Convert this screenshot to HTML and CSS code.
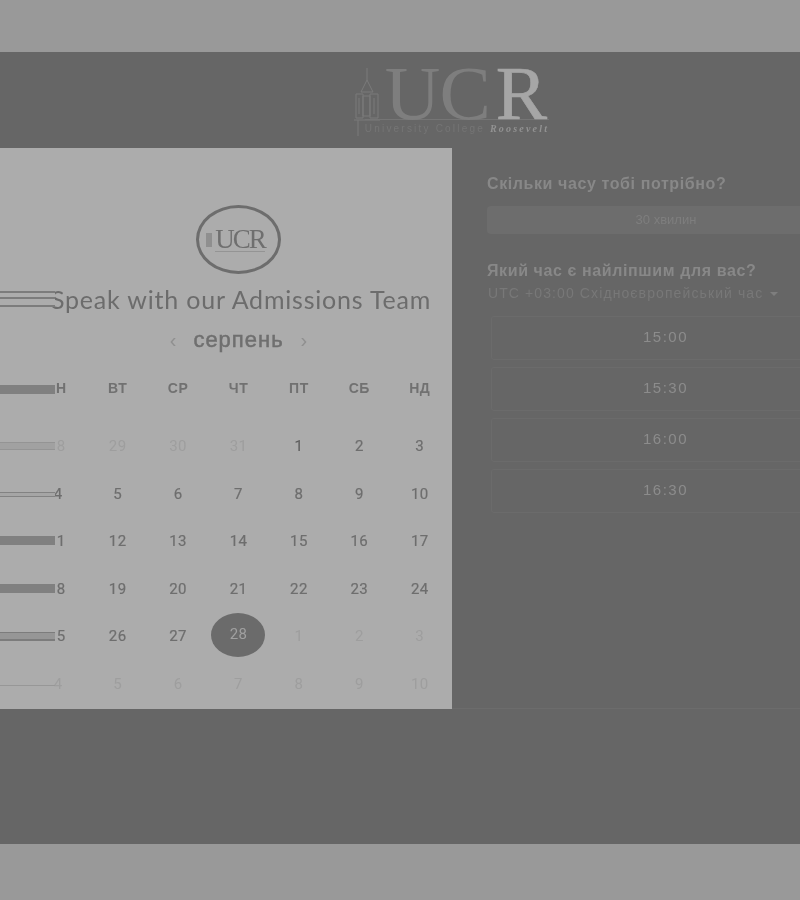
FILE: index.html
```html
<!DOCTYPE html>
<html lang="en">

<head>
    <meta charset="UTF-8">
    <meta name="viewport" content="width=device-width, initial-scale=1.0">
    <title>Speak with our Admissions Team</title>
    <link rel="stylesheet" href="styles.css">
</head>

<body>
    <div class="top-strip"></div>

    <div class="page">
        <div class="site-header">
            <div class="logo">
                <svg class="logo-tower" width="32" height="70" viewBox="0 0 32 70" fill="none" stroke="#7b7b7b" stroke-width="1">
                    <path d="M14 0V12M14 12L8 24H20L14 12M3 26H10V50H3ZM17 26H25V50H17ZM10 28H17V48H10ZM1 52H27M6 30V46M21 30V46M5 52V68" />
                </svg>
                <div class="logo-text">
                    <div class="logo-letters"><span class="logo-uc">UC</span><span class="logo-r">R</span></div>
                    <div class="logo-sub">University College <em>Roosevelt</em></div>
                </div>
            </div>
        </div>

        <div class="booking">
            <div class="calendar-panel">
                <div class="badge">
                    <span class="badge-tower"></span>
                    <span class="badge-text">UCR</span>
                </div>
                <h1 class="title">
                    <span class="title-lines"></span>Speak with our Admissions Team
                </h1>
                <div class="month">
                    <span class="month-arrow">&lsaquo;</span>
                    <span class="month-name">серпень</span>
                    <span class="month-arrow">&rsaquo;</span>
                </div>

                <div class="calendar">
                    <div class="day-name clipped"><span class="bar bar-solid"></span>Н</div>
                    <div class="day-name">ВТ</div>
                    <div class="day-name">СР</div>
                    <div class="day-name">ЧТ</div>
                    <div class="day-name">ПТ</div>
                    <div class="day-name">СБ</div>
                    <div class="day-name">НД</div>

                    <div class="day muted clipped"><span class="bar bar-pale"></span>8</div>
                    <div class="day muted">29</div>
                    <div class="day muted">30</div>
                    <div class="day muted">31</div>
                    <div class="day dark">1</div>
                    <div class="day">2</div>
                    <div class="day">3</div>

                    <div class="day"><span class="bar bar-thin"></span>4</div>
                    <div class="day">5</div>
                    <div class="day">6</div>
                    <div class="day">7</div>
                    <div class="day">8</div>
                    <div class="day">9</div>
                    <div class="day">10</div>

                    <div class="day clipped"><span class="bar bar-solid"></span>1</div>
                    <div class="day">12</div>
                    <div class="day">13</div>
                    <div class="day">14</div>
                    <div class="day">15</div>
                    <div class="day">16</div>
                    <div class="day">17</div>

                    <div class="day clipped"><span class="bar bar-solid"></span>8</div>
                    <div class="day">19</div>
                    <div class="day">20</div>
                    <div class="day">21</div>
                    <div class="day">22</div>
                    <div class="day">23</div>
                    <div class="day">24</div>

                    <div class="day clipped"><span class="bar bar-double"></span>5</div>
                    <div class="day">26</div>
                    <div class="day">27</div>
                    <div class="day selected"><span class="selected-dot">28</span></div>
                    <div class="day muted">1</div>
                    <div class="day muted">2</div>
                    <div class="day muted">3</div>

                    <div class="day muted"><span class="bar bar-hair"></span>4</div>
                    <div class="day muted">5</div>
                    <div class="day muted">6</div>
                    <div class="day muted">7</div>
                    <div class="day muted">8</div>
                    <div class="day muted">9</div>
                    <div class="day muted">10</div>
                </div>
            </div>

            <div class="time-panel">
                <h2 class="time-title">Скільки часу тобі потрібно?</h2>
                <div class="duration">30 хвилин</div>
                <h2 class="time-title time-title-second">Який час є найліпшим для вас?</h2>
                <div class="timezone">UTC +03:00 Східноєвропейський час <span class="caret"></span></div>
                <div class="slots">
                    <div class="slot">15:00</div>
                    <div class="slot">15:30</div>
                    <div class="slot">16:00</div>
                    <div class="slot">16:30</div>
                </div>
            </div>
        </div>
    </div>

    <div class="bottom-strip"></div>
</body>

</html>
```

FILE: styles.css
```css
body {
    margin: 0;
    padding: 0;
    width: 800px;
    height: 900px;
    overflow: hidden;
    background-color: #999;
    font-family: "Liberation Sans", Arial, sans-serif;
}

.top-strip {
    height: 52px;
    background-color: #999;
}

.bottom-strip {
    height: 56px;
    background-color: #999;
}

.page {
    height: 792px;
    background-color: #666;
}

/* header logo */
.site-header {
    height: 96px;
    display: flex;
    justify-content: center;
    filter: blur(0.6px);
}

.logo {
    display: flex;
    align-items: flex-start;
    margin-left: 102px;
    padding-top: 15px;
}

.logo-tower {
    margin-top: 1px;
}

.logo-letters {
    font-family: "Liberation Serif", serif;
    font-size: 77px;
    line-height: 52px;
    letter-spacing: -1px;
    height: 52px;
}

.logo-uc {
    color: #7e7e7e;
}

.logo-r {
    color: #a6a6a6;
    letter-spacing: 0;
    margin-left: 6px;
    -webkit-text-stroke: 0.6px #a6a6a6;
}

.logo-sub {
    margin-top: 0;
    padding-top: 2px;
    margin-left: -20px;
    border-top: 1px solid #757575;
    font-size: 10px;
    line-height: 14px;
    letter-spacing: 2.2px;
    color: #757575;
    white-space: nowrap;
}

.logo-sub em {
    font-family: "Liberation Serif", serif;
    font-weight: bold;
    color: #929292;
}

/* two panels */
.booking {
    display: flex;
    height: 561px;
}

.calendar-panel {
    width: 452px;
    flex: none;
    background-color: #acacac;
    display: flex;
    flex-direction: column;
    align-items: center;
    filter: blur(0.5px);
}

.badge {
    width: 85px;
    height: 69px;
    box-sizing: border-box;
    margin-top: 57px;
    margin-left: 25px;
    border: 3px solid #6d6d6d;
    border-radius: 50%;
    display: flex;
    align-items: center;
    justify-content: center;
    gap: 3px;
}

.badge-tower {
    width: 6px;
    height: 14px;
    margin-left: -6px;
    background-color: #8f8f8f;
}

.badge-text {
    font-family: "Liberation Serif", serif;
    font-size: 27px;
    line-height: 24px;
    letter-spacing: -2px;
    border-bottom: 1px solid #949494;
    color: #6f6f6f;
}

.title {
    position: relative;
    align-self: stretch;
    margin: 9px 0 0;
    padding-right: 21px;
    font-family: Lato, sans-serif;
    font-size: 25px;
    font-weight: 400;
    line-height: 32px;
    letter-spacing: 0.8px;
    text-align: right;
    color: #6c6c6c;
    white-space: nowrap;
}

.title-lines {
    position: absolute;
    left: 0;
    top: 8px;
    width: 55px;
    height: 16px;
    border-top: 2px solid #7c7c7c;
    border-bottom: 2px solid #7c7c7c;
    box-sizing: border-box;
    background: linear-gradient(#acacac 4px, #7c7c7c 4px, #7c7c7c 6px, #acacac 6px);
}

.month {
    margin-top: 9px;
    margin-left: 25px;
    display: flex;
    align-items: center;
    gap: 17px;
    height: 32px;
}

.month-name {
    font-size: 22px;
    letter-spacing: 1px;
    color: #6f6f6f;
    -webkit-text-stroke: 0.5px #6f6f6f;
}

.month-arrow {
    font-size: 20px;
    line-height: 24px;
    color: #8f8f8f;
}

/* calendar grid */
.calendar {
    align-self: flex-start;
    margin-left: 27px;
    margin-top: 17px;
    width: 423px;
    display: grid;
    grid-template-columns: repeat(7, 1fr);
    grid-template-rows: 50px repeat(6, 47.5px);
    font-family: Roboto, sans-serif;
    font-size: 15px;
    text-align: center;
}

.day-name {
    position: relative;
    font-family: "Liberation Sans", sans-serif;
    font-size: 14px;
    font-weight: bold;
    line-height: 30px;
    letter-spacing: 0.5px;
    color: #717171;
}

.day {
    position: relative;
    line-height: 47.5px;
    letter-spacing: 0.4px;
    color: #6e6e6e;
    -webkit-text-stroke: 0.2px #6e6e6e;
}

.day:nth-child(7n+1) {
    padding-left: 2px;
}

.day.clipped,
.day-name.clipped {
    padding-left: 8px;
}

.dark {
    color: #5c5c5c;
}

.muted {
    color: #9e9e9e;
    -webkit-text-stroke: 0;
}

.selected {
    display: flex;
    align-items: center;
    justify-content: center;
}

.selected-dot {
    width: 54px;
    height: 44px;
    margin-top: -3px;
    border-radius: 50%;
    background-color: #6b6b6b;
    color: #a0a0a0;
    line-height: 42px;
    -webkit-text-stroke: 0;
}

/* leftover stripes coming in from the cut off left column */
.bar {
    position: absolute;
    left: -27px;
    width: 55px;
}

.day-name .bar {
    top: 12px;
}

.bar-solid {
    top: 18px;
    height: 9px;
    background-color: #808080;
}

.bar-pale {
    top: 19px;
    height: 8px;
    background-color: #a1a1a1;
    border-top: 1px solid #949494;
    border-bottom: 1px solid #949494;
    box-sizing: border-box;
}

.bar-thin {
    top: 21px;
    height: 5px;
    background-color: #a5a5a5;
    border-top: 1px solid #828282;
    border-bottom: 1px solid #828282;
    box-sizing: border-box;
}

.bar-double {
    top: 19px;
    height: 9px;
    background-color: #969696;
    border-top: 1px solid #7c7c7c;
    border-bottom: 2px solid #7c7c7c;
    box-sizing: border-box;
}

.bar-hair {
    top: 24px;
    height: 1px;
    background-color: #979797;
}

/* right panel */
.time-panel {
    flex: 1;
    padding: 26px 0 0 35px;
    border-bottom: 1px solid #6c6c6c;
    filter: blur(0.5px);
    min-width: 0;
    overflow: hidden;
}

.time-title {
    margin: 0;
    font-size: 16px;
    font-weight: bold;
    line-height: 20px;
    letter-spacing: 0.6px;
    color: #888;
    white-space: nowrap;
}

.time-title-second {
    margin-top: 27px;
}

.duration {
    margin-top: 12px;
    width: 358px;
    height: 28px;
    border-radius: 4px;
    background-color: #6d6d6d;
    font-size: 13px;
    line-height: 28px;
    text-align: center;
    color: #7e7e7e;
}

.timezone {
    margin-top: 4px;
    padding-left: 1px;
    font-size: 14px;
    line-height: 17px;
    letter-spacing: 1.1px;
    color: #787878;
    white-space: nowrap;
}

.caret {
    display: inline-block;
    margin-left: 2px;
    vertical-align: middle;
    border-left: 4px solid transparent;
    border-right: 4px solid transparent;
    border-top: 4px solid #7e7e7e;
}

.slots {
    margin-top: 14px;
    margin-left: 4px;
    width: 349px;
    display: flex;
    flex-direction: column;
    gap: 7px;
}

.slot {
    height: 44px;
    box-sizing: border-box;
    border: 1px solid #6b6b6b;
    border-radius: 3px;
    font-size: 15px;
    line-height: 39px;
    letter-spacing: 1.5px;
    text-align: center;
    color: #8c8c8c;
}
```
